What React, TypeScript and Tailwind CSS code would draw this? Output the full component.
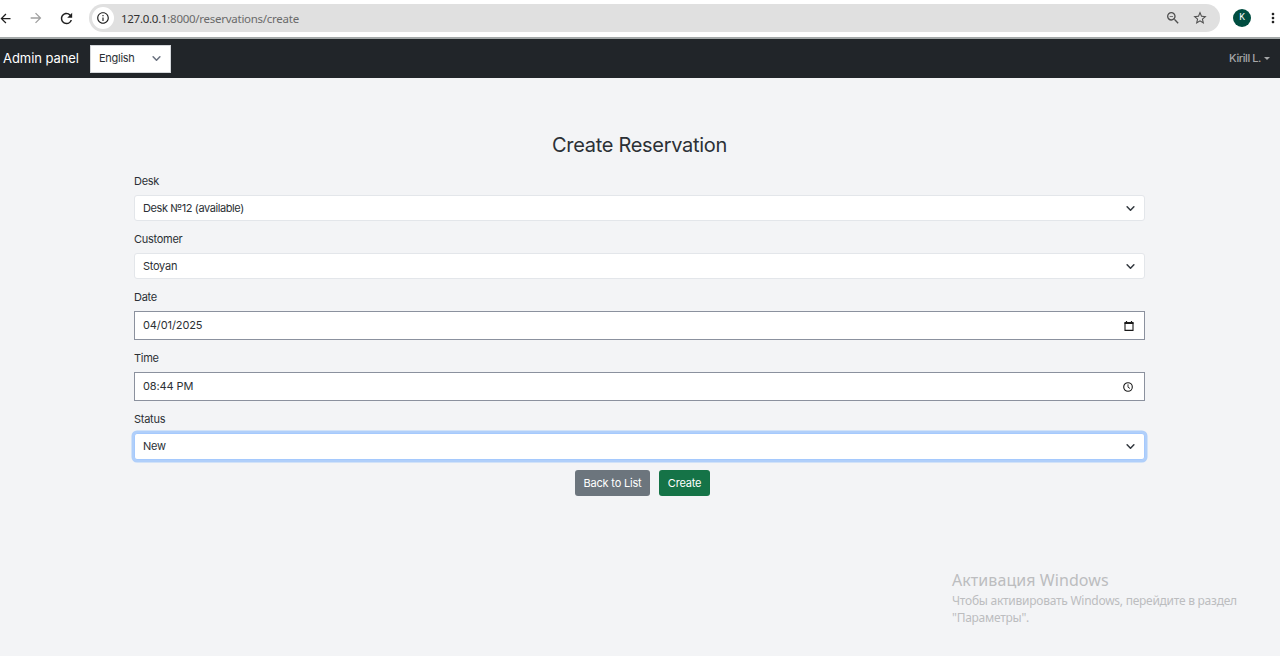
import React from "react";
import {
  MdArrowBack,
  MdArrowForward,
  MdRefresh,
  MdInfoOutline,
  MdZoomOut,
  MdStarBorder,
  MdMoreVert,
} from "react-icons/md";

function Chevron({ className }: { className: string }) {
  return (
    <svg viewBox="0 0 16 16" className={className} fill="none" stroke="currentColor" strokeWidth="2.8" strokeLinecap="round" strokeLinejoin="round">
      <path d="m2 5 6 6 6-6" />
    </svg>
  );
}

function CalendarIcon() {
  return (
    <svg viewBox="0 0 10 10" className="mr-[2px] size-[10px]" fill="none" stroke="#1a1a1a">
      <path d="M1 2h8v7.4H1z" strokeWidth="1.1" />
      <path d="M.5 2h9" strokeWidth="2" />
      <path d="M2.5 0v2M7.5 0v2" strokeWidth="1.2" />
    </svg>
  );
}

function ClockIcon() {
  return (
    <svg viewBox="0 0 10 10" className="mr-[3px] size-[10px]" fill="none" stroke="#1a1a1a">
      <circle cx="5" cy="5" r="4.3" strokeWidth="1.1" />
      <path d="M5 2.3v2.9l2 1.3" strokeWidth=".9" />
    </svg>
  );
}

function BrowserBar() {
  return (
    <header className="flex h-[39px] shrink-0 items-start border-b-2 border-[#a3a8a8] bg-white pt-1 text-[#1f1f1f]">
      <div className="-ml-[2px] flex h-7 w-[91px] shrink-0 items-center">
        <MdArrowBack className="size-[15px]" />
        <MdArrowForward className="ml-[15px] size-4 text-[#a0a0a0]" />
        <MdRefresh className="ml-[14px] size-[17px]" />
      </div>
      <div className="flex h-[28px] w-[1131px] shrink-0 items-center rounded-full bg-[#e0e0e0] pr-[12px] pl-[3px]">
        <span className="flex size-[22px] items-center justify-center rounded-full bg-white">
          <MdInfoOutline className="size-[14px]" />
        </span>
        <span className="mt-px ml-[7px] flex-1 font-['Noto_Sans',sans-serif] text-[11.5px] tracking-[-0.27px] text-[#6a6a6a]">
          <span className="text-[#303030]">127.0.0.1</span>:8000/reservations/create
        </span>
        <MdZoomOut className="size-[16px] text-[#505050]" />
        <MdStarBorder className="ml-[11px] size-[16px] text-[#505050]" />
      </div>
      <span className="mt-[5px] ml-[13px] flex size-[18px] shrink-0 items-center justify-center rounded-full bg-[#004d40] font-['Roboto',sans-serif] text-[9px] text-white">
        K
      </span>
      <MdMoreVert className="mt-[6px] ml-[14px] size-4 shrink-0" />
    </header>
  );
}

function Label({ children }: { children: React.ReactNode }) {
  return <label className="flex h-[17px] items-center">{children}</label>;
}

function Select({ value, tracking = "", focused = false }: { value: string; tracking?: string; focused?: boolean }) {
  return (
    <div
      className={
        focused
          ? "mt-[5px] flex h-[27px] items-center justify-between rounded-[3px] border border-[#a5c9fd] bg-white pr-[9px] pl-2 ring-[2.5px] ring-[#b0cffa]"
          : "mt-[5px] flex h-[26px] items-center justify-between rounded-[3px] border border-[#e3e6ea] bg-white pr-[9px] pl-2"
      }
    >
      <span className={tracking}>{value}</span>
      <Chevron className="size-[9px] text-[#343a40]" />
    </div>
  );
}

function Input({ value, icon }: { value: string; icon: React.ReactNode }) {
  return (
    <div className="mt-[5px] flex h-[29px] items-center justify-between border border-[#8b919e] bg-white pr-[8px] pl-[8px]">
      <span className="tracking-[-0.1px]">{value}</span>
      {icon}
    </div>
  );
}

export default function App() {
  return (
    <div className="relative flex h-[656px] w-[1280px] flex-col overflow-hidden bg-[#f3f4f6] font-['Inter',sans-serif] text-[11px] tracking-[-0.27px] text-[#2b3035]">
      <BrowserBar />
      <nav className="flex h-[39px] shrink-0 items-center bg-[#212529] pr-[10px] pl-[3px]">
        <span className="w-[87px] text-[13px] tracking-[-0.06px] text-white">Admin panel</span>
        <div className="flex h-[28px] w-[81px] items-center justify-between border border-[#d5d8dc] bg-white pr-[9px] pl-2">
          <span>English</span>
          <Chevron className="size-[9px] text-[#6b7280]" />
        </div>
        <div className="ml-auto flex items-center gap-[3px] text-[#a6a8a9]">
          <span className="font-medium tracking-[-0.42px]">Kirill L.</span>
          <span className="border-x-[3px] border-t-[3px] border-x-transparent border-t-[#a6a8a9]" />
        </div>
      </nav>
      <main className="ml-[134px] flex w-[1011px] flex-col pt-[55px]">
        <h1 className="flex h-6 items-center justify-center text-[20px] tracking-[-0.3px]">Create Reservation</h1>
        <form className="mt-[16px] flex flex-col">
          <Label>Desk</Label>
          <Select value="Desk №12 (available)" tracking="tracking-[-0.42px]" />
          <div className="h-[10px]" />
          <Label>Customer</Label>
          <Select value="Stoyan" />
          <div className="h-[10px]" />
          <Label>Date</Label>
          <Input value="04/01/2025" icon={<CalendarIcon />} />
          <div className="h-[10px]" />
          <Label>Time</Label>
          <Input value="08:44 PM" icon={<ClockIcon />} />
          <div className="h-[10px]" />
          <Label>Status</Label>
          <Select value="New" focused />
          <div className="mt-[10px] ml-[6px] flex justify-center gap-[9px] text-white">
            <button type="button" className="h-[26px] w-[75px] rounded-[3px] bg-[#6c757d] tracking-[-0.2px]">Back to List</button>
            <button type="button" className="h-[26px] w-[51px] rounded-[3px] bg-[#157347] tracking-[-0.2px]">Create</button>
          </div>
        </form>
      </main>
      <aside className="absolute top-[569px] left-[952px] font-['Noto_Sans',sans-serif] whitespace-nowrap text-[#bcbdbf]">
        <p className="text-[16px] leading-[22px] tracking-[0.07px]">Активация Windows</p>
        <p className="mt-px text-[12px] leading-[17px] tracking-[-0.26px]">Чтобы активировать Windows, перейдите в раздел</p>
        <p className="text-[12px] leading-[17px] tracking-[-0.26px]">"Параметры".</p>
      </aside>
    </div>
  );
}
